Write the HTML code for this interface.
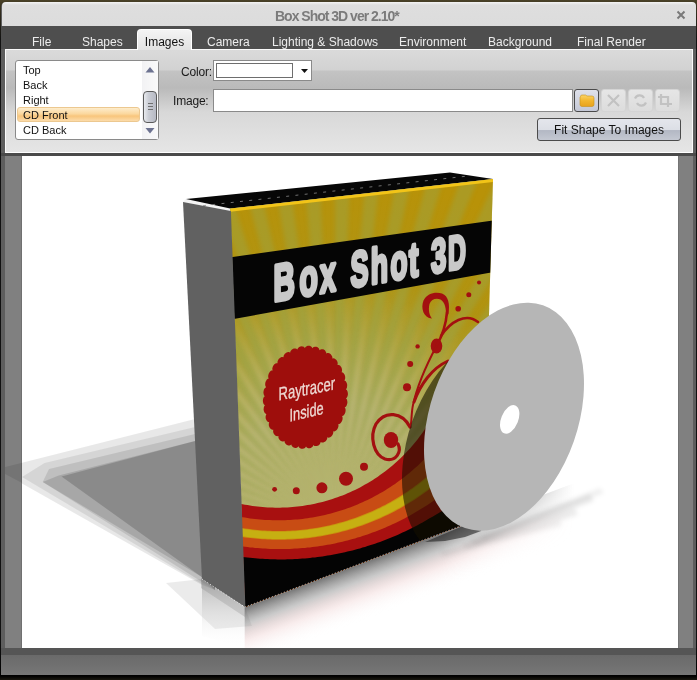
<!DOCTYPE html>
<html><head><meta charset="utf-8">
<style>
*{margin:0;padding:0;box-sizing:border-box}
html,body{will-change:transform;width:697px;height:680px;overflow:hidden;background:#2a2618;font-family:"Liberation Sans",sans-serif}
.a{position:absolute}
#bg{left:0;top:0;width:697px;height:680px;background:linear-gradient(#4a4228 0,#3a3420 6px,#111 40px,#111 640px,#000 676px,#1a1810 680px)}
#win{left:1px;top:2px;width:695px;height:673px;background:#5e5e5e;border-radius:5px 5px 0 0}
#title{left:2px;top:2px;width:694px;height:24px;background:linear-gradient(#f4f4f4,#dedede 3px,#dcdcdc);border-radius:4px 4px 0 0;font-weight:bold;font-size:14px;letter-spacing:-1px;color:#7b7b7b;text-align:left;line-height:28px;padding-left:273px}
#close{left:676px;top:10px;width:10px;height:10px}
#tabs{left:1px;top:26px;width:695px;height:23px;background:#4e4e4e}
.tab{top:27px;font-size:12px;color:#ececec;line-height:30px;height:23px}
#seltab{left:137px;top:29px;width:55px;height:21px;background:linear-gradient(#f4f4f4,#e2e2e2);border:1px solid #fff;border-bottom:none;border-radius:4px 4px 0 0;color:#111;font-size:12px;line-height:25px;text-align:center}
#panel{left:5px;top:49px;width:688px;height:104px;border:1px solid #fafafa;border-bottom:1px solid #fff;background:linear-gradient(#dadada 0,#d2d2d2 20px,#c3c3c3 21px,#bababa 38px,#d8d8d8 62px,#e6e6e6 104px)}
#darkline{left:1px;top:153px;width:695px;height:3px;background:#4a4a4a}
#frame{left:5px;top:156px;width:688px;height:492px;background:#808080}
#fl{left:21px;top:156px;width:1px;height:492px;background:#707070}
#fr{left:678px;top:156px;width:1px;height:492px;background:#747474}
#view{left:22px;top:156px;width:656px;height:492px;background:#fff;overflow:hidden}
#bottom1{left:1px;top:648px;width:695px;height:7px;background:#555}
#bottom2{left:1px;top:655px;width:695px;height:20px;background:linear-gradient(#6a6a6a,#707070 10px,#777)}

#lb{left:15px;top:60px;width:144px;height:80px;background:#fff;border:1px solid #8a8a8a;border-radius:3px}
.li{left:23px;margin-top:1px;font-size:11px;color:#111;line-height:15px;height:15px}
#sel{left:17px;top:107px;width:123px;height:15px;border:1px solid #ecc890;border-radius:3px;background:linear-gradient(#fdeccc,#fbd89e 45%,#f8c57c 62%,#fcdcaa)}
#sb{left:142px;top:61px;width:16px;height:78px;background:linear-gradient(90deg,#f2f2f4,#fafafa)}
#thumb{left:143px;top:91px;width:14px;height:32px;border:1px solid #5a5a5a;border-radius:4px;background:linear-gradient(90deg,#e8eaee,#c9ccd4 40%,#b7bac4)}
.lbl{font-size:12px;color:#1a1a1a;line-height:14px;letter-spacing:-0.2px}
#combo{left:213px;top:60px;width:99px;height:21px;background:#fff;border:1px solid #8a8a8a}
#sw{left:216px;top:63px;width:77px;height:15px;background:#fff;border:1px solid #6e6e6e}
#imgf{left:213px;top:89px;width:360px;height:23px;background:#fff;border:1px solid #8a8a8a}
.btn{top:89px;width:25px;height:23px;border-radius:3px}
#b1{left:574px;border:1px solid #4a4a4a;background:linear-gradient(#dfe1ea,#c4c8d6)}
.dis{border:1px solid #d4d4d4;background:linear-gradient(#e6e6e6,#dcdcdc)}
#fit{left:537px;top:118px;width:144px;height:23px;border:1px solid #4c4c4c;border-radius:3px;background:linear-gradient(#e4e6ec 0,#dcdfe6 50%,#b3b8c4 55%,#c4c8d2 100%);font-size:12px;color:#111;text-align:center;line-height:22px}
</style></head><body>
<div class="a" id="bg"></div>
<div class="a" id="win"></div>
<div class="a" id="title">Box Shot 3D ver 2.10*</div>
<svg class="a" id="close" viewBox="0 0 10 10"><path d="M1.5 1.5L8.5 8.5M8.5 1.5L1.5 8.5" stroke="#7a7a7a" stroke-width="2"/></svg>
<div class="a" id="tabs"></div>
<div class="a tab" style="left:32px">File</div>
<div class="a tab" style="left:82px">Shapes</div>
<div class="a tab" style="left:207px">Camera</div>
<div class="a tab" style="left:272px">Lighting &amp; Shadows</div>
<div class="a tab" style="left:399px">Environment</div>
<div class="a tab" style="left:488px">Background</div>
<div class="a tab" style="left:577px">Final Render</div>
<div class="a" id="darkline"></div>
<div class="a" id="panel"></div>

<div class="a" id="lb"></div>
<div class="a" id="sel"></div>
<div class="a li" style="top:62px">Top</div>
<div class="a li" style="top:77px">Back</div>
<div class="a li" style="top:92px">Right</div>
<div class="a li" style="top:107px">CD Front</div>
<div class="a li" style="top:122px">CD Back</div>
<div class="a" id="sb"></div>
<svg class="a" style="left:142px;top:62px" width="16" height="76"><path d="M3.5 10.5L8 5L12.5 10.5Z" fill="#6c7290"/><path d="M3.5 66L8 71.5L12.5 66Z" fill="#6c7290"/></svg>
<div class="a" id="thumb"></div>
<svg class="a" style="left:143px;top:91px" width="14" height="32"><path d="M5 12.5H10M5 15.5H10M5 18.5H10" stroke="#707070" stroke-width="1"/></svg>
<div class="a lbl" style="left:181px;top:65px">Color:</div>
<div class="a lbl" style="left:173px;top:94px">Image:</div>
<div class="a" id="combo"></div>
<div class="a" id="sw"></div>
<svg class="a" style="left:300px;top:67px" width="10" height="8"><path d="M1 2H8L4.5 6Z" fill="#111"/></svg>
<div class="a" id="imgf"></div>
<div class="a btn" id="b1"></div>
<svg class="a" style="left:579px;top:94px" width="16" height="13"><defs><linearGradient id="fg" x1="0" y1="0" x2="0" y2="1"><stop offset="0" stop-color="#fbd468"/><stop offset="0.5" stop-color="#f2b52e"/><stop offset="1" stop-color="#e8a21c"/></linearGradient></defs><path d="M1.5 2.5Q1.5 1 3 1H6.5L8 2H13Q15 2 15 4V10.5Q15 12.5 13 12.5H3Q1 12.5 1 10.5V3Z" fill="url(#fg)" stroke="#c8901a" stroke-width="0.6"/></svg>
<div class="a btn dis" style="left:601px"></div>
<div class="a btn dis" style="left:628px"></div>
<div class="a btn dis" style="left:655px"></div>
<svg class="a" style="left:601px;top:89px" width="80" height="23"><g stroke="#c2c2c2" stroke-width="2.2" fill="none"><path d="M7 6L18 17M18 6L7 17"/><path d="M34 9.5A5 5 0 0 1 43 9M45 13.5A5 5 0 0 1 36 14"/><path d="M60 5V15H71M57 8H67V18"/></g></svg>
<div class="a" id="fit">Fit Shape To Images</div>
<div class="a" id="seltab">Images</div>
<div class="a" id="frame"></div>
<div class="a" id="fl"></div><div class="a" id="fr"></div><div class="a" id="view"></div>
<svg class="a" id="scene" style="left:0;top:0" width="697" height="680" viewBox="0 0 697 680">
<defs>
<clipPath id="vc"><rect x="22" y="156" width="656" height="492"/></clipPath>
<clipPath id="fc"><path d="M230.2,208.6 L493,179 L483,517.5 L245,607 Z"/></clipPath>
<radialGradient id="sun" gradientUnits="userSpaceOnUse" cx="330" cy="500" r="330">
<stop offset="0" stop-color="#b8b272"/><stop offset="0.3" stop-color="#b0ac66"/><stop offset="0.5" stop-color="#aaa03a"/><stop offset="0.7" stop-color="#b09412"/><stop offset="1" stop-color="#b89208"/>
</radialGradient>
<linearGradient id="yg" x1="0" y1="0" x2="0" y2="1"><stop offset="0" stop-color="#c4ac14"/><stop offset="1" stop-color="#c4ac14"/></linearGradient>
<linearGradient id="hfade" x1="0" y1="0" x2="1" y2="0"><stop offset="0" stop-color="#fff"/><stop offset="0.6" stop-color="#fff"/><stop offset="1" stop-color="#000"/></linearGradient>
<mask id="hm" maskUnits="userSpaceOnUse" x="200" y="450" width="420" height="220"><rect x="244" y="450" width="330" height="220" fill="url(#hfade)"/></mask>
<filter id="blr" x="-10%" y="-10%" width="120%" height="120%"><feGaussianBlur stdDeviation="2"/></filter>
<radialGradient id="rmg" gradientUnits="userSpaceOnUse" cx="320" cy="500" r="220"><stop offset="0" stop-color="#fff"/><stop offset="0.6" stop-color="#fff"/><stop offset="1" stop-color="#000"/></radialGradient>
<mask id="rm" maskUnits="userSpaceOnUse" x="200" y="150" width="320" height="480"><rect x="200" y="150" width="320" height="480" fill="url(#rmg)"/></mask>
<linearGradient id="refl" gradientUnits="userSpaceOnUse" x1="0" y1="0" x2="0" y2="1"><stop offset="0" stop-color="#000" stop-opacity="0.3"/><stop offset="1" stop-color="#000" stop-opacity="0"/></linearGradient>
<linearGradient id="sref" x1="0" y1="0" x2="0" y2="1"><stop offset="0" stop-color="#888" stop-opacity="0.55"/><stop offset="1" stop-color="#fff" stop-opacity="0"/></linearGradient>
<linearGradient id="fref" x1="0" y1="0" x2="0" y2="1"><stop offset="0" stop-color="#505050" stop-opacity="0.8"/><stop offset="0.3" stop-color="#888888" stop-opacity="0.45"/><stop offset="0.6" stop-color="#d89090" stop-opacity="0.16"/><stop offset="1" stop-color="#fff" stop-opacity="0"/></linearGradient>
</defs>
<g clip-path="url(#vc)">
 <!-- shadows -->
 <path d="M5,467 L195,419 L215,419 L215,590 L202,585 L5,474 Z" fill="#000" opacity="0.09"/>
 <path d="M44.5,463 L195,427 L215,427 L215,590 L202,584 L22,477 Z" fill="#000" opacity="0.08"/>
 <path d="M49,469 L195,434 L215,434 L215,590 L202,582 L42.7,482 Z" fill="#000" opacity="0.1"/>
 <path d="M58.6,475.6 L195,441 L215,441 L215,590 L201,576.5 L42.7,482 Z" fill="#000" opacity="0.12"/>
 <path d="M61.5,476.5 L195,441 L215,441 L215,590 L201,576.5 Z" fill="#000" opacity="0.17"/>
 <!-- reflections -->
 <path d="M166,583 L202,579 L245,607 L252,626 L215,629 Z" fill="#000" opacity="0.08"/>
 <path d="M201,578 L245,607 L245,617 L201,588 Z" fill="#000" opacity="0.15"/>
 <path d="M202,579 L244.7,607 L244.7,648 L202,636 Z" fill="url(#sref)"/>
 <g mask="url(#hm)"><g transform="matrix(1,-0.3756,0,1,0,0)"><rect x="244.7" y="698.9" width="330" height="58" fill="url(#fref)"/></g></g>
 <g filter="url(#blr)">
 <path d="M468,540 L590,494 L594,501 L476,545 Z" fill="#000" opacity="0.08"/>
 <path d="M460,544 L575,508 L578,515 L468,549 Z" fill="#000" opacity="0.07"/>
 <path d="M478,536 L600,488 L604,493 L484,540 Z" fill="#000" opacity="0.06"/>
 <path d="M440,552 L560,520 L562,526 L444,557 Z" fill="#000" opacity="0.05"/>
 </g>
</g>
</g>
</g>
<path d="M5,467 L22,462.7 L22,483 L5,474 Z" fill="#000" opacity="0.09"/>
<!-- side face -->

<path d="M183,202 L186,199 L230.2,208.6 L230.2,211.1 Z" fill="#f4f4f4"/>
<!-- top face -->
<path d="M186,199 L450,172.5 L493,179 L230.2,208.6 Z" fill="#070707"/>
<path d="M203,205.7 L470,175.8" stroke="#8a8a8a" stroke-width="1" stroke-dasharray="3 6.3" opacity="0.8"/>
<!-- front face -->
<g clip-path="url(#fc)">
 <rect x="220" y="170" width="280" height="450" fill="url(#sun)"/>
 <path d="M335,525 L-165,525 L-165,503 ZM335,525 L-163,481 L-161,460 ZM335,525 L-157,438 L-153,417 ZM335,525 L-148,396 L-142,375 ZM335,525 L-135,354 L-127,334 ZM335,525 L-118,314 L-109,294 ZM335,525 L-98,275 L-87,256 ZM335,525 L-75,238 L-62,221 ZM335,525 L-48,204 L-34,187 ZM335,525 L-19,171 L-3,156 ZM335,525 L14,142 L31,128 ZM335,525 L48,115 L66,103 ZM335,525 L85,92 L104,81 ZM335,525 L124,72 L144,63 ZM335,525 L164,55 L185,48 ZM335,525 L206,42 L227,37 ZM335,525 L248,33 L270,29 ZM335,525 L291,27 L313,25 ZM335,525 L335,25 L357,25 ZM335,525 L379,27 L400,29 ZM335,525 L422,33 L443,37 ZM335,525 L464,42 L485,48 ZM335,525 L506,55 L526,63 ZM335,525 L546,72 L566,81 ZM335,525 L585,92 L604,103 ZM335,525 L622,115 L639,128 ZM335,525 L656,142 L673,156 ZM335,525 L689,171 L704,187 ZM335,525 L718,204 L732,221 ZM335,525 L745,238 L757,256 ZM335,525 L768,275 L779,294 ZM335,525 L788,314 L797,334 ZM335,525 L805,354 L812,375 ZM335,525 L818,396 L823,417 ZM335,525 L827,438 L831,460 ZM335,525 L833,481 L835,503 Z" fill="#98a850" opacity="0.4" filter="url(#blr)"/>
 <path d="M335,525 L-165,503 L-164,488 ZM335,525 L-161,460 L-158,445 ZM335,525 L-153,417 L-150,402 ZM335,525 L-142,375 L-137,360 ZM335,525 L-127,334 L-121,320 ZM335,525 L-109,294 L-101,281 ZM335,525 L-87,256 L-78,244 ZM335,525 L-62,221 L-52,209 ZM335,525 L-34,187 L-23,176 ZM335,525 L-3,156 L9,146 ZM335,525 L31,128 L43,119 ZM335,525 L66,103 L79,95 ZM335,525 L104,81 L118,75 ZM335,525 L144,63 L158,57 ZM335,525 L185,48 L199,44 ZM335,525 L227,37 L242,34 ZM335,525 L270,29 L285,28 ZM335,525 L313,25 L328,25 ZM335,525 L357,25 L372,26 ZM335,525 L400,29 L415,32 ZM335,525 L443,37 L458,40 ZM335,525 L485,48 L500,53 ZM335,525 L526,63 L540,69 ZM335,525 L566,81 L579,89 ZM335,525 L604,103 L616,112 ZM335,525 L639,128 L651,138 ZM335,525 L673,156 L684,167 ZM335,525 L704,187 L714,199 ZM335,525 L732,221 L741,233 ZM335,525 L757,256 L765,269 ZM335,525 L779,294 L785,308 ZM335,525 L797,334 L803,348 ZM335,525 L812,375 L816,389 ZM335,525 L823,417 L826,432 ZM335,525 L831,460 L832,475 ZM335,525 L835,503 L835,518 Z" fill="#e8e4b0" opacity="0.22" filter="url(#blr)" mask="url(#rm)"/>
 <!-- stripes -->
 <path d="M225.0,499.8 L227.5,500.5 L230.0,501.2 L232.5,501.9 L235.0,502.5 L237.5,503.1 L240.0,503.7 L242.5,504.2 L245.0,504.7 L247.5,505.1 L250.0,505.6 L252.5,505.9 L255.0,506.3 L257.5,506.6 L260.0,506.8 L262.5,507.1 L265.0,507.3 L267.5,507.4 L270.0,507.5 L272.5,507.6 L275.0,507.7 L277.5,507.7 L280.0,507.7 L282.5,507.6 L285.0,507.5 L287.5,507.4 L290.0,507.3 L292.5,507.1 L295.0,506.8 L297.5,506.6 L300.0,506.3 L302.5,505.9 L305.0,505.6 L307.5,505.1 L310.0,504.7 L312.5,504.2 L315.0,503.7 L317.5,503.1 L320.0,502.5 L322.5,501.9 L325.0,501.2 L327.5,500.5 L330.0,499.8 L332.5,499.0 L335.0,498.1 L337.5,497.3 L340.0,496.3 L342.5,495.4 L345.0,494.4 L347.5,493.3 L350.0,492.2 L352.5,491.1 L355.0,489.9 L357.5,488.7 L360.0,487.4 L362.5,486.0 L365.0,484.6 L367.5,483.2 L370.0,481.7 L372.5,480.2 L375.0,478.5 L377.5,476.9 L380.0,475.1 L382.5,473.3 L385.0,471.5 L387.5,469.5 L390.0,467.5 L392.5,465.4 L395.0,463.3 L397.5,461.0 L400.0,458.7 L402.5,456.3 L405.0,453.7 L407.5,451.1 L410.0,448.4 L412.5,445.5 L415.0,442.5 L417.5,439.4 L420.0,436.1 L422.5,432.7 L425.0,429.0 L427.5,425.2 L430.0,421.2 L432.5,417.2 L435.0,413.2 L437.5,409.2 L440.0,405.2 L442.5,401.3 L445.0,397.3 L447.5,393.3 L450.0,389.3 L452.5,385.3 L455.0,381.3 L457.5,377.3 L460.0,373.3 L462.5,369.3 L465.0,365.3 L467.5,361.4 L470.0,357.4 L472.5,353.4 L475.0,349.4 L477.5,345.4 L480.0,341.4 L482.5,337.4 L485.0,333.4 L487.5,329.4 L490.0,325.4 L492.5,321.4 L495.0,317.5 L497.5,313.5 L500.0,309.5 L500,620 L225,620Z" fill="#a81010"/>
 <path d="M225.0,513.3 L227.5,513.9 L230.0,514.6 L232.5,515.2 L235.0,515.7 L237.5,516.2 L240.0,516.7 L242.5,517.2 L245.0,517.6 L247.5,518.0 L250.0,518.4 L252.5,518.7 L255.0,519.0 L257.5,519.3 L260.0,519.5 L262.5,519.7 L265.0,519.9 L267.5,520.0 L270.0,520.1 L272.5,520.2 L275.0,520.3 L277.5,520.3 L280.0,520.3 L282.5,520.3 L285.0,520.2 L287.5,520.1 L290.0,520.0 L292.5,519.8 L295.0,519.6 L297.5,519.4 L300.0,519.2 L302.5,518.9 L305.0,518.6 L307.5,518.2 L310.0,517.8 L312.5,517.4 L315.0,517.0 L317.5,516.5 L320.0,516.0 L322.5,515.5 L325.0,514.9 L327.5,514.3 L330.0,513.7 L332.5,513.0 L335.0,512.3 L337.5,511.6 L340.0,510.8 L342.5,510.0 L345.0,509.2 L347.5,508.3 L350.0,507.4 L352.5,506.4 L355.0,505.4 L357.5,504.4 L360.0,503.3 L362.5,502.2 L365.0,501.1 L367.5,499.9 L370.0,498.7 L372.5,497.4 L375.0,496.1 L377.5,494.7 L380.0,493.3 L382.5,491.9 L385.0,490.4 L387.5,488.8 L390.0,487.2 L392.5,485.6 L395.0,483.9 L397.5,482.1 L400.0,480.3 L402.5,478.4 L405.0,476.5 L407.5,474.5 L410.0,472.5 L412.5,470.3 L415.0,468.1 L417.5,465.9 L420.0,463.5 L422.5,461.1 L425.0,458.6 L427.5,456.0 L430.0,453.3 L432.5,450.6 L435.0,448.0 L437.5,445.3 L440.0,442.6 L442.5,440.0 L445.0,437.3 L447.5,434.6 L450.0,432.0 L452.5,429.3 L455.0,426.6 L457.5,424.0 L460.0,421.3 L462.5,418.7 L465.0,416.0 L467.5,413.3 L470.0,410.7 L472.5,408.0 L475.0,405.3 L477.5,402.7 L480.0,400.0 L482.5,397.3 L485.0,394.7 L487.5,392.0 L490.0,389.3 L492.5,386.7 L495.0,384.0 L497.5,381.3 L500.0,378.7 L500,620 L225,620Z" fill="#c84c14"/>
 <path d="M225.0,524.5 L227.5,525.1 L230.0,525.7 L232.5,526.2 L235.0,526.7 L237.5,527.2 L240.0,527.6 L242.5,528.0 L245.0,528.4 L247.5,528.8 L250.0,529.1 L252.5,529.4 L255.0,529.7 L257.5,530.0 L260.0,530.2 L262.5,530.4 L265.0,530.5 L267.5,530.7 L270.0,530.8 L272.5,530.9 L275.0,530.9 L277.5,531.0 L280.0,531.0 L282.5,530.9 L285.0,530.9 L287.5,530.8 L290.0,530.7 L292.5,530.6 L295.0,530.4 L297.5,530.2 L300.0,530.0 L302.5,529.7 L305.0,529.5 L307.5,529.2 L310.0,528.8 L312.5,528.5 L315.0,528.1 L317.5,527.7 L320.0,527.2 L322.5,526.8 L325.0,526.3 L327.5,525.7 L330.0,525.2 L332.5,524.6 L335.0,524.0 L337.5,523.3 L340.0,522.6 L342.5,521.9 L345.0,521.2 L347.5,520.4 L350.0,519.6 L352.5,518.8 L355.0,517.9 L357.5,517.0 L360.0,516.1 L362.5,515.1 L365.0,514.1 L367.5,513.1 L370.0,512.0 L372.5,510.9 L375.0,509.8 L377.5,508.6 L380.0,507.4 L382.5,506.1 L385.0,504.9 L387.5,503.5 L390.0,502.2 L392.5,500.7 L395.0,499.3 L397.5,497.8 L400.0,496.3 L402.5,494.7 L405.0,493.0 L407.5,491.4 L410.0,489.6 L412.5,487.9 L415.0,486.0 L417.5,484.2 L420.0,482.2 L422.5,480.2 L425.0,478.2 L427.5,476.1 L430.0,473.9 L432.5,471.8 L435.0,469.6 L437.5,467.5 L440.0,465.3 L442.5,463.2 L445.0,461.0 L447.5,458.9 L450.0,456.7 L452.5,454.6 L455.0,452.4 L457.5,450.3 L460.0,448.1 L462.5,446.0 L465.0,443.8 L467.5,441.7 L470.0,439.5 L472.5,437.4 L475.0,435.2 L477.5,433.1 L480.0,430.9 L482.5,428.8 L485.0,426.6 L487.5,424.5 L490.0,422.3 L492.5,420.2 L495.0,418.0 L497.5,415.9 L500.0,413.7 L500,620 L225,620Z" fill="#c8920f"/>
 <path d="M225.0,525.3 L227.5,525.9 L230.0,526.5 L232.5,527.0 L235.0,527.5 L237.5,528.0 L240.0,528.4 L242.5,528.8 L245.0,529.2 L247.5,529.6 L250.0,529.9 L252.5,530.2 L255.0,530.5 L257.5,530.7 L260.0,531.0 L262.5,531.2 L265.0,531.3 L267.5,531.5 L270.0,531.6 L272.5,531.7 L275.0,531.7 L277.5,531.7 L280.0,531.7 L282.5,531.7 L285.0,531.7 L287.5,531.6 L290.0,531.5 L292.5,531.3 L295.0,531.2 L297.5,531.0 L300.0,530.8 L302.5,530.5 L305.0,530.3 L307.5,530.0 L310.0,529.6 L312.5,529.3 L315.0,528.9 L317.5,528.5 L320.0,528.1 L322.5,527.6 L325.0,527.1 L327.5,526.6 L330.0,526.0 L332.5,525.4 L335.0,524.8 L337.5,524.2 L340.0,523.5 L342.5,522.8 L345.0,522.1 L347.5,521.3 L350.0,520.5 L352.5,519.7 L355.0,518.8 L357.5,517.9 L360.0,517.0 L362.5,516.0 L365.0,515.1 L367.5,514.0 L370.0,513.0 L372.5,511.9 L375.0,510.8 L377.5,509.6 L380.0,508.4 L382.5,507.1 L385.0,505.9 L387.5,504.6 L390.0,503.2 L392.5,501.8 L395.0,500.4 L397.5,498.9 L400.0,497.4 L402.5,495.8 L405.0,494.2 L407.5,492.5 L410.0,490.8 L412.5,489.1 L415.0,487.3 L417.5,485.4 L420.0,483.5 L422.5,481.5 L425.0,479.5 L427.5,477.4 L430.0,475.3 L432.5,473.2 L435.0,471.1 L437.5,468.9 L440.0,466.8 L442.5,464.7 L445.0,462.6 L447.5,460.5 L450.0,458.3 L452.5,456.2 L455.0,454.1 L457.5,452.0 L460.0,449.8 L462.5,447.7 L465.0,445.6 L467.5,443.5 L470.0,441.4 L472.5,439.2 L475.0,437.1 L477.5,435.0 L480.0,432.9 L482.5,430.7 L485.0,428.6 L487.5,426.5 L490.0,424.4 L492.5,422.3 L495.0,420.1 L497.5,418.0 L500.0,415.9 L500,620 L225,620Z" fill="#c6b012"/>
 <path d="M225.0,532.9 L227.5,533.5 L230.0,534.0 L232.5,534.5 L235.0,534.9 L237.5,535.4 L240.0,535.8 L242.5,536.2 L245.0,536.6 L247.5,536.9 L250.0,537.2 L252.5,537.5 L255.0,537.8 L257.5,538.0 L260.0,538.2 L262.5,538.4 L265.0,538.6 L267.5,538.7 L270.0,538.8 L272.5,538.9 L275.0,538.9 L277.5,539.0 L280.0,539.0 L282.5,539.0 L285.0,538.9 L287.5,538.8 L290.0,538.7 L292.5,538.6 L295.0,538.5 L297.5,538.3 L300.0,538.1 L302.5,537.9 L305.0,537.6 L307.5,537.4 L310.0,537.1 L312.5,536.7 L315.0,536.4 L317.5,536.0 L320.0,535.6 L322.5,535.2 L325.0,534.7 L327.5,534.2 L330.0,533.7 L332.5,533.2 L335.0,532.6 L337.5,532.0 L340.0,531.4 L342.5,530.7 L345.0,530.1 L347.5,529.4 L350.0,528.6 L352.5,527.9 L355.0,527.1 L357.5,526.3 L360.0,525.4 L362.5,524.5 L365.0,523.6 L367.5,522.7 L370.0,521.7 L372.5,520.7 L375.0,519.6 L377.5,518.6 L380.0,517.5 L382.5,516.3 L385.0,515.2 L387.5,514.0 L390.0,512.7 L392.5,511.5 L395.0,510.1 L397.5,508.8 L400.0,507.4 L402.5,506.0 L405.0,504.5 L407.5,503.0 L410.0,501.5 L412.5,499.9 L415.0,498.3 L417.5,496.6 L420.0,494.9 L422.5,493.1 L425.0,491.3 L427.5,489.4 L430.0,487.5 L432.5,485.7 L435.0,483.8 L437.5,481.9 L440.0,480.0 L442.5,478.1 L445.0,476.2 L447.5,474.3 L450.0,472.4 L452.5,470.5 L455.0,468.6 L457.5,466.7 L460.0,464.8 L462.5,462.9 L465.0,461.0 L467.5,459.2 L470.0,457.3 L472.5,455.4 L475.0,453.5 L477.5,451.6 L480.0,449.7 L482.5,447.8 L485.0,445.9 L487.5,444.0 L490.0,442.1 L492.5,440.2 L495.0,438.3 L497.5,436.4 L500.0,434.5 L500,620 L225,620Z" fill="#c8920f"/>
 <path d="M225.0,533.7 L227.5,534.3 L230.0,534.8 L232.5,535.3 L235.0,535.7 L237.5,536.2 L240.0,536.6 L242.5,537.0 L245.0,537.4 L247.5,537.7 L250.0,538.0 L252.5,538.3 L255.0,538.5 L257.5,538.8 L260.0,539.0 L262.5,539.2 L265.0,539.3 L267.5,539.5 L270.0,539.6 L272.5,539.7 L275.0,539.7 L277.5,539.7 L280.0,539.8 L282.5,539.7 L285.0,539.7 L287.5,539.6 L290.0,539.5 L292.5,539.4 L295.0,539.3 L297.5,539.1 L300.0,538.9 L302.5,538.7 L305.0,538.4 L307.5,538.2 L310.0,537.9 L312.5,537.5 L315.0,537.2 L317.5,536.8 L320.0,536.4 L322.5,536.0 L325.0,535.5 L327.5,535.0 L330.0,534.5 L332.5,534.0 L335.0,533.4 L337.5,532.9 L340.0,532.2 L342.5,531.6 L345.0,530.9 L347.5,530.2 L350.0,529.5 L352.5,528.7 L355.0,528.0 L357.5,527.1 L360.0,526.3 L362.5,525.4 L365.0,524.5 L367.5,523.6 L370.0,522.6 L372.5,521.6 L375.0,520.6 L377.5,519.5 L380.0,518.4 L382.5,517.3 L385.0,516.1 L387.5,515.0 L390.0,513.7 L392.5,512.5 L395.0,511.2 L397.5,509.8 L400.0,508.5 L402.5,507.0 L405.0,505.6 L407.5,504.1 L410.0,502.6 L412.5,501.0 L415.0,499.4 L417.5,497.7 L420.0,496.0 L422.5,494.3 L425.0,492.5 L427.5,490.7 L430.0,488.8 L432.5,486.9 L435.0,485.1 L437.5,483.2 L440.0,481.3 L442.5,479.4 L445.0,477.6 L447.5,475.7 L450.0,473.8 L452.5,472.0 L455.0,470.1 L457.5,468.2 L460.0,466.3 L462.5,464.5 L465.0,462.6 L467.5,460.7 L470.0,458.9 L472.5,457.0 L475.0,455.1 L477.5,453.2 L480.0,451.4 L482.5,449.5 L485.0,447.6 L487.5,445.8 L490.0,443.9 L492.5,442.0 L495.0,440.1 L497.5,438.3 L500.0,436.4 L500,620 L225,620Z" fill="#c84c14"/>
 <path d="M225.0,543.4 L227.5,543.9 L230.0,544.4 L232.5,544.8 L235.0,545.3 L237.5,545.7 L240.0,546.1 L242.5,546.4 L245.0,546.8 L247.5,547.1 L250.0,547.4 L252.5,547.6 L255.0,547.9 L257.5,548.1 L260.0,548.3 L262.5,548.5 L265.0,548.6 L267.5,548.8 L270.0,548.9 L272.5,549.0 L275.0,549.0 L277.5,549.0 L280.0,549.1 L282.5,549.0 L285.0,549.0 L287.5,549.0 L290.0,548.9 L292.5,548.8 L295.0,548.6 L297.5,548.5 L300.0,548.3 L302.5,548.1 L305.0,547.9 L307.5,547.6 L310.0,547.4 L312.5,547.1 L315.0,546.8 L317.5,546.4 L320.0,546.1 L322.5,545.7 L325.0,545.3 L327.5,544.8 L330.0,544.4 L332.5,543.9 L335.0,543.4 L337.5,542.8 L340.0,542.3 L342.5,541.7 L345.0,541.1 L347.5,540.4 L350.0,539.8 L352.5,539.1 L355.0,538.4 L357.5,537.6 L360.0,536.9 L362.5,536.1 L365.0,535.2 L367.5,534.4 L370.0,533.5 L372.5,532.6 L375.0,531.7 L377.5,530.7 L380.0,529.7 L382.5,528.7 L385.0,527.7 L387.5,526.6 L390.0,525.5 L392.5,524.3 L395.0,523.2 L397.5,522.0 L400.0,520.7 L402.5,519.5 L405.0,518.2 L407.5,516.8 L410.0,515.5 L412.5,514.1 L415.0,512.6 L417.5,511.1 L420.0,509.6 L422.5,508.1 L425.0,506.5 L427.5,504.9 L430.0,503.2 L432.5,501.6 L435.0,499.9 L437.5,498.3 L440.0,496.6 L442.5,494.9 L445.0,493.3 L447.5,491.6 L450.0,490.0 L452.5,488.3 L455.0,486.7 L457.5,485.0 L460.0,483.4 L462.5,481.7 L465.0,480.1 L467.5,478.4 L470.0,476.8 L472.5,475.1 L475.0,473.5 L477.5,471.8 L480.0,470.1 L482.5,468.5 L485.0,466.8 L487.5,465.2 L490.0,463.5 L492.5,461.9 L495.0,460.2 L497.5,458.6 L500.0,456.9 L500,620 L225,620Z" fill="#a81010"/>
 <path d="M225.0,554.0 L227.5,554.5 L230.0,555.0 L232.5,555.4 L235.0,555.8 L237.5,556.2 L240.0,556.6 L242.5,556.9 L245.0,557.2 L247.5,557.5 L250.0,557.8 L252.5,558.0 L255.0,558.3 L257.5,558.5 L260.0,558.7 L262.5,558.8 L265.0,559.0 L267.5,559.1 L270.0,559.2 L272.5,559.3 L275.0,559.3 L277.5,559.4 L280.0,559.4 L282.5,559.4 L285.0,559.4 L287.5,559.3 L290.0,559.2 L292.5,559.2 L295.0,559.0 L297.5,558.9 L300.0,558.8 L302.5,558.6 L305.0,558.4 L307.5,558.2 L310.0,557.9 L312.5,557.6 L315.0,557.4 L317.5,557.1 L320.0,556.7 L322.5,556.4 L325.0,556.0 L327.5,555.6 L330.0,555.2 L332.5,554.7 L335.0,554.3 L337.5,553.8 L340.0,553.3 L342.5,552.7 L345.0,552.2 L347.5,551.6 L350.0,551.0 L352.5,550.4 L355.0,549.7 L357.5,549.1 L360.0,548.4 L362.5,547.6 L365.0,546.9 L367.5,546.1 L370.0,545.3 L372.5,544.5 L375.0,543.7 L377.5,542.8 L380.0,541.9 L382.5,541.0 L385.0,540.0 L387.5,539.1 L390.0,538.1 L392.5,537.0 L395.0,536.0 L397.5,534.9 L400.0,533.8 L402.5,532.6 L405.0,531.5 L407.5,530.3 L410.0,529.0 L412.5,527.8 L415.0,526.5 L417.5,525.2 L420.0,523.8 L422.5,522.5 L425.0,521.0 L427.5,519.6 L430.0,518.1 L432.5,516.7 L435.0,515.2 L437.5,513.7 L440.0,512.3 L442.5,510.8 L445.0,509.3 L447.5,507.9 L450.0,506.4 L452.5,504.9 L455.0,503.4 L457.5,502.0 L460.0,500.5 L462.5,499.0 L465.0,497.6 L467.5,496.1 L470.0,494.6 L472.5,493.2 L475.0,491.7 L477.5,490.2 L480.0,488.8 L482.5,487.3 L485.0,485.8 L487.5,484.4 L490.0,482.9 L492.5,481.4 L495.0,479.9 L497.5,478.5 L500.0,477.0 L500,620 L225,620Z" fill="#040404"/>
 <path d="M230.2,208.6 L493,179 L493,182 L230.2,211.8 Z" fill="#f2c418"/>
 <path d="M225,258 L500,219.5 L500,271 L225,320.5 Z" fill="#050505"/>
 <g fill="#c9c9c9" stroke="#c9c9c9" stroke-width="8" stroke-linejoin="round" font-family="Liberation Sans" font-weight="bold" font-size="100"><text transform="matrix(0.2957,-0.0526,0,0.5156,273.49,301.26)">B</text><text transform="matrix(0.2988,-0.0532,0,0.5101,299.60,296.63)">o</text><text transform="matrix(0.2855,-0.0508,0,0.5058,319.93,293.03)">x</text><text transform="matrix(0.2701,-0.0481,0,0.4987,350.57,287.60)">S</text><text transform="matrix(0.2821,-0.0502,0,0.4942,370.85,284.01)">h</text><text transform="matrix(0.2776,-0.0494,0,0.4898,390.60,280.51)">o</text><text transform="matrix(0.2839,-0.0505,0,0.4865,408.98,277.26)">t</text><text transform="matrix(0.2753,-0.0490,0,0.4810,430.88,273.38)">3</text><text transform="matrix(0.2484,-0.0442,0,0.4767,448.12,270.33)">D</text></g>
 <path d="M347.3,403.2 L347.1,404.1 L346.8,405.0 L346.4,405.9 L345.8,406.7 L344.7,407.4 L345.4,408.6 L345.6,409.6 L345.6,410.6 L345.5,411.6 L345.3,412.5 L344.9,413.4 L344.5,414.2 L343.9,415.0 L343.2,415.7 L342.1,416.1 L342.6,417.4 L342.6,418.5 L342.5,419.5 L342.2,420.4 L341.9,421.3 L341.4,422.1 L340.9,422.8 L340.2,423.5 L339.4,424.0 L338.2,424.2 L338.5,425.6 L338.4,426.6 L338.1,427.6 L337.7,428.5 L337.2,429.3 L336.7,430.0 L336.0,430.6 L335.3,431.1 L334.4,431.4 L333.3,431.3 L333.3,432.8 L333.0,433.8 L332.6,434.7 L332.1,435.5 L331.5,436.2 L330.9,436.7 L330.1,437.2 L329.3,437.5 L328.5,437.7 L327.3,437.3 L327.2,438.8 L326.7,439.7 L326.2,440.5 L325.6,441.2 L324.9,441.7 L324.2,442.1 L323.4,442.4 L322.6,442.6 L321.7,442.5 L320.7,441.9 L320.3,443.3 L319.7,444.2 L319.1,444.9 L318.4,445.4 L317.6,445.8 L316.9,446.0 L316.1,446.1 L315.2,446.1 L314.4,445.9 L313.5,445.0 L312.9,446.3 L312.2,447.0 L311.5,447.6 L310.7,448.0 L309.9,448.2 L309.2,448.3 L308.4,448.2 L307.6,448.0 L306.8,447.5 L306.0,446.5 L305.2,447.7 L304.5,448.2 L303.7,448.6 L302.9,448.8 L302.1,448.8 L301.3,448.8 L300.6,448.5 L299.8,448.1 L299.1,447.5 L298.5,446.3 L297.6,447.3 L296.8,447.7 L295.9,447.9 L295.1,447.9 L294.4,447.8 L293.6,447.5 L292.9,447.1 L292.3,446.5 L291.7,445.8 L291.3,444.4 L290.2,445.2 L289.4,445.4 L288.5,445.4 L287.7,445.3 L287.0,445.0 L286.3,444.5 L285.7,444.0 L285.2,443.2 L284.7,442.4 L284.5,441.0 L283.4,441.5 L282.5,441.5 L281.7,441.3 L280.9,441.0 L280.3,440.5 L279.7,439.9 L279.2,439.2 L278.7,438.4 L278.4,437.4 L278.4,436.0 L277.3,436.3 L276.4,436.1 L275.6,435.7 L275.0,435.2 L274.4,434.6 L273.9,433.9 L273.5,433.1 L273.2,432.2 L273.1,431.1 L273.3,429.7 L272.1,429.7 L271.3,429.3 L270.6,428.8 L270.1,428.2 L269.6,427.5 L269.2,426.6 L268.9,425.7 L268.8,424.8 L268.8,423.7 L269.2,422.3 L268.1,422.1 L267.4,421.5 L266.8,420.8 L266.3,420.1 L266.0,419.3 L265.7,418.4 L265.6,417.4 L265.6,416.4 L265.8,415.4 L266.4,414.1 L265.3,413.6 L264.7,412.9 L264.3,412.1 L263.9,411.2 L263.7,410.3 L263.6,409.4 L263.7,408.4 L263.8,407.4 L264.1,406.4 L264.9,405.3 L264.0,404.5 L263.5,403.7 L263.2,402.8 L263.0,401.9 L262.9,400.9 L262.9,400.0 L263.1,399.0 L263.4,398.1 L263.9,397.1 L264.8,396.2 L264.0,395.3 L263.7,394.3 L263.5,393.3 L263.4,392.4 L263.5,391.4 L263.7,390.5 L264.0,389.6 L264.4,388.7 L265.0,387.9 L266.1,387.2 L265.4,386.0 L265.2,385.0 L265.2,384.0 L265.3,383.0 L265.5,382.1 L265.9,381.2 L266.3,380.4 L266.9,379.6 L267.6,378.9 L268.7,378.5 L268.2,377.2 L268.2,376.1 L268.3,375.1 L268.6,374.2 L268.9,373.3 L269.4,372.5 L269.9,371.8 L270.6,371.1 L271.4,370.6 L272.6,370.4 L272.3,369.0 L272.4,368.0 L272.7,367.0 L273.1,366.1 L273.6,365.3 L274.1,364.6 L274.8,364.0 L275.5,363.5 L276.4,363.2 L277.5,363.3 L277.5,361.8 L277.8,360.8 L278.2,359.9 L278.7,359.1 L279.3,358.4 L279.9,357.9 L280.7,357.4 L281.5,357.1 L282.3,356.9 L283.5,357.3 L283.6,355.8 L284.1,354.9 L284.6,354.1 L285.2,353.4 L285.9,352.9 L286.6,352.5 L287.4,352.2 L288.2,352.0 L289.1,352.1 L290.1,352.7 L290.5,351.3 L291.1,350.4 L291.7,349.7 L292.4,349.2 L293.2,348.8 L293.9,348.6 L294.7,348.5 L295.6,348.5 L296.4,348.7 L297.3,349.6 L297.9,348.3 L298.6,347.6 L299.3,347.0 L300.1,346.6 L300.9,346.4 L301.6,346.3 L302.4,346.4 L303.2,346.6 L304.0,347.1 L304.8,348.1 L305.6,346.9 L306.3,346.4 L307.1,346.0 L307.9,345.8 L308.7,345.8 L309.5,345.8 L310.2,346.1 L311.0,346.5 L311.7,347.1 L312.3,348.3 L313.2,347.3 L314.0,346.9 L314.9,346.7 L315.7,346.7 L316.4,346.8 L317.2,347.1 L317.9,347.5 L318.5,348.1 L319.1,348.8 L319.5,350.2 L320.6,349.4 L321.4,349.2 L322.3,349.2 L323.1,349.3 L323.8,349.6 L324.5,350.1 L325.1,350.6 L325.6,351.4 L326.1,352.2 L326.3,353.6 L327.4,353.1 L328.3,353.1 L329.1,353.3 L329.9,353.6 L330.5,354.1 L331.1,354.7 L331.6,355.4 L332.1,356.2 L332.4,357.2 L332.4,358.6 L333.5,358.3 L334.4,358.5 L335.2,358.9 L335.8,359.4 L336.4,360.0 L336.9,360.7 L337.3,361.5 L337.6,362.4 L337.7,363.5 L337.5,364.9 L338.7,364.9 L339.5,365.3 L340.2,365.8 L340.7,366.4 L341.2,367.1 L341.6,368.0 L341.9,368.9 L342.0,369.8 L342.0,370.9 L341.6,372.3 L342.7,372.5 L343.4,373.1 L344.0,373.8 L344.5,374.5 L344.8,375.3 L345.1,376.2 L345.2,377.2 L345.2,378.2 L345.0,379.2 L344.4,380.5 L345.5,381.0 L346.1,381.7 L346.5,382.5 L346.9,383.4 L347.1,384.3 L347.2,385.2 L347.1,386.2 L347.0,387.2 L346.7,388.2 L345.9,389.3 L346.8,390.1 L347.3,390.9 L347.6,391.8 L347.8,392.7 L347.9,393.7 L347.9,394.6 L347.7,395.6 L347.4,396.5 L346.9,397.5 L346.0,398.4 L346.8,399.3 L347.1,400.3 L347.3,401.3 L347.4,402.2Z" fill="#9e0e0c"/>
 <g fill="#eed8d2" stroke="#eed8d2" stroke-width="0.3" font-family="Liberation Sans">
  <text transform="matrix(0.705,-0.14,0,1,278.5,400.6)" font-size="18.5">Raytracer</text>
  <text transform="matrix(0.71,-0.165,0,1,289.5,421.7)" font-size="18">Inside</text>
 </g>
 <!-- swirls -->
 <g fill="#a31010">
  <path d="M432,318.5 C423.5,318 420.5,308 423.5,300.5 C427,293 436,291.5 442,293.5 C448.5,296 450,304 448.5,314 L446,318 C446.5,309 445,302 440.5,299.5 C436.5,297.5 431,299 429.5,304 C428,310 429.5,315.5 432,318.5 Z"/>
  <circle cx="274.6" cy="489.3" r="2.4"/><circle cx="296.3" cy="490.8" r="3.5"/><circle cx="321.9" cy="487.8" r="5.5"/><circle cx="346" cy="478.8" r="7"/><circle cx="364" cy="466.7" r="4"/>
  <circle cx="468.8" cy="294.7" r="2.5"/><circle cx="458.2" cy="308.8" r="2.8"/><ellipse cx="436.5" cy="346" rx="5.8" ry="7.5"/><circle cx="417.6" cy="346.4" r="2.2"/><circle cx="410.2" cy="364" r="3"/><circle cx="407" cy="387.3" r="4"/>
  <circle cx="479" cy="282.6" r="2"/>
  <ellipse cx="391" cy="440" rx="7.2" ry="8"/>
 </g>
 <g fill="none" stroke="#a31010" stroke-linecap="round">
  <path d="M447,312 C446,325 441,338 436.5,346" stroke-width="2.6"/>
  <path d="M436.5,346 C428,362 418,382 413,405 C411,414 412,424 410,427" stroke-width="2"/>
  <path d="M441,336 C450,322 466,312 478,322" stroke-width="2.5"/>
  <path d="M410,427 C402,412 385,410 376,424 C369,437 374,455 385,459 C396,462 402,452 398,444" stroke-width="3.2"/>
  <path d="M414,402 C420,385 432,368 448,361" stroke-width="3"/>
 </g>
 <!-- CD shadow on box -->
 <g transform="rotate(19.3 482 446)"><ellipse cx="482" cy="446" rx="74" ry="118" fill="#141000" opacity="0.58"/></g>
</g>
<path d="M183,202 L230.9,211.1 L245.4,607.3 L202,579 Z" fill="#616161"/>
<path d="M425,542 L483,517.5 L481,531 L465,537 L445,541 Z" fill="#222" opacity="0.6"/>
<path d="M245,606.5 L483,517" fill="none" stroke="#060606" stroke-width="1"/>
<path d="M202,579 L244.7,607 L483,517.5" fill="none" stroke="#fff" stroke-width="0.9" stroke-dasharray="1 2.2" opacity="0.9"/>
<!-- CD -->
<g transform="rotate(19.3 504 416.7)"><ellipse cx="504" cy="416.7" rx="74" ry="118" fill="#b6b6b6"/></g>
<g transform="rotate(22 509.7 419.4)"><ellipse cx="509.7" cy="419.4" rx="8.5" ry="15" fill="#fff"/></g>
</svg>
<div class="a" id="bottom1"></div>
<div class="a" id="bottom2"></div>
</body></html>
